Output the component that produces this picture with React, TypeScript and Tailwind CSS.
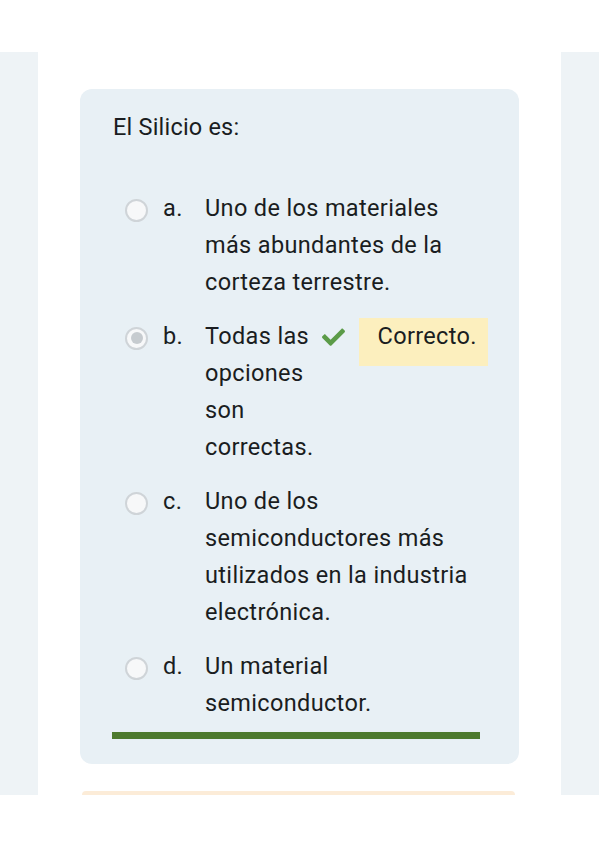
import React from "react";

const font = { fontFamily: "Roboto, 'Noto Sans', sans-serif" };

function Radio({ checked }: { checked?: boolean }) {
  return (
    <div className="w-[23px] h-[23px] rounded-full border-2 border-[#cfd4d8] bg-[#f7f8f9] flex items-center justify-center">
      {checked && <div className="w-[12px] h-[12px] rounded-full bg-[#c6cbcf]" />}
    </div>
  );
}

function Lines({ lines }: { lines: string[] }) {
  return (
    <div className="flex flex-col">
      {lines.map((l, i) => (
        <span key={i} className="whitespace-nowrap h-[37px]">
          {l}
        </span>
      ))}
    </div>
  );
}

function Option({
  letter,
  lines,
  checked,
  extra,
}: {
  letter: string;
  lines: string[];
  checked?: boolean;
  extra?: React.ReactNode;
}) {
  return (
    <div className="flex items-start pl-[12px]">
      <div className="h-[37px] flex items-center pt-[3px]">
        <Radio checked={checked} />
      </div>
      <div className="w-[42px] ml-[15px]">{letter}</div>
      <Lines lines={lines} />
      {extra}
    </div>
  );
}

export default function App() {
  return (
    <div
      className="w-[599px] h-[848px] bg-white overflow-hidden text-[#1a1d21] text-[23.5px] leading-[37px]"
      style={font}
    >
      <div className="h-[52px]" />
      <div className="flex h-[743px] overflow-hidden">
        <div className="w-[38px] bg-[#eef3f6]" />
        <div className="flex-1 flex flex-col pl-[42px] pt-[37px]">
          <div className="w-[439px] h-[677px] rounded-[12px] bg-[#e8f0f5] pl-[33px] pt-[20px] flex flex-col">
            <div className="tracking-[0.2px]">El Silicio es:</div>
            <div className="flex flex-col gap-[17px] mt-[44px] tracking-[0.35px]">
              <Option
                letter="a."
                lines={["Uno de los materiales", "más abundantes de la", "corteza terrestre."]}
              />
              <Option
                letter="b."
                checked
                lines={["Todas las", "opciones", "son", "correctas."]}
                extra={
                  <>
                    <div className="h-[37px] flex items-center ml-[9px]">
                      <svg width="23" height="19" viewBox="0 0 512 420">
                        <path
                          fill="#5b9b48"
                          d="M173.9 407.9L7.5 241.5c-10-10-10-26.2 0-36.2l36.2-36.2c10-10 26.2-10 36.2 0L192 281.1 432.1 41c10-10 26.2-10 36.2 0l36.2 36.2c10 10 10 26.2 0 36.2L210.1 407.9c-10 10-26.2 10-36.2 0z"
                        />
                      </svg>
                    </div>
                    <div className="ml-[14px] h-[48px] bg-[#fcefbe] pl-[18px] pr-[11px] whitespace-nowrap">
                      Correcto.
                    </div>
                  </>
                }
              />
              <Option
                letter="c."
                lines={["Uno de los", "semiconductores más", "utilizados en la industria", "electrónica."]}
              />
              <Option letter="d." lines={["Un material", "semiconductor."]} />
            </div>
            <div className="mt-[10px] ml-[-1px] w-[368px] h-[7px] bg-[#4d7a2e]" />
          </div>
          <div className="mt-[27px] ml-[2px] w-[433px] h-[4px] rounded-t-[6px] bg-[#fcecd8]" />
        </div>
        <div className="w-[38px] bg-[#eef3f6]" />
      </div>
    </div>
  );
}
